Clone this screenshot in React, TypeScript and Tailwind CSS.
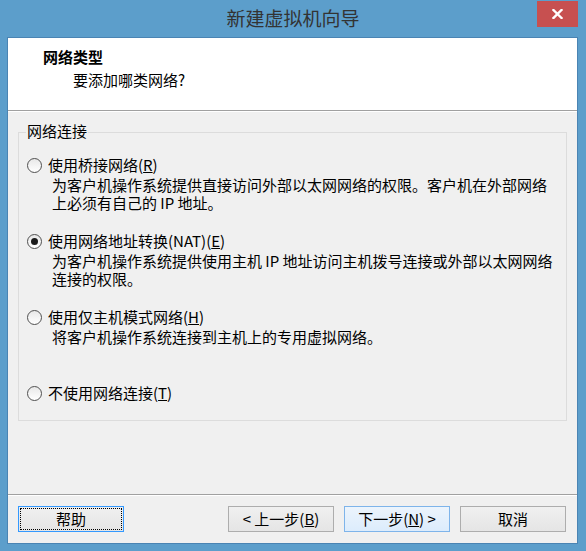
import React from 'react'

const Radio: React.FC<{ checked?: boolean }> = ({ checked }) => (
  <span className="w-[15px] h-[15px] shrink-0 rounded-full border border-[#505050] bg-gradient-to-b from-[#e8e8e8] to-white flex items-center justify-center">
    {checked && <span className="w-[7px] h-[7px] rounded-full bg-[#1a1a1a]" />}
  </span>
)

type Option = {
  label: React.ReactNode
  lines: string[]
  checked?: boolean
}

const options: Option[] = [
  {
    label: (
      <>
        使用桥接网络(<u>R</u>)
      </>
    ),
    lines: ['为客户机操作系统提供直接访问外部以太网网络的权限。客户机在外部网络', '上必须有自己的 IP 地址。'],
  },
  {
    label: (
      <>
        使用网络地址转换(NAT)(<u>E</u>)
      </>
    ),
    lines: ['为客户机操作系统提供使用主机 IP 地址访问主机拨号连接或外部以太网网络', '连接的权限。'],
    checked: true,
  },
  {
    label: (
      <>
        使用仅主机模式网络(<u>H</u>)
      </>
    ),
    lines: ['将客户机操作系统连接到主机上的专用虚拟网络。'],
  },
  {
    label: (
      <>
        不使用网络连接(<u>T</u>)
      </>
    ),
    lines: [],
  },
]

const Button: React.FC<{ children: React.ReactNode; kind?: 'focus' | 'default' }> = ({ children, kind }) => {
  const look =
    kind === 'focus'
      ? 'border-[#3399ff] bg-gradient-to-b from-[#f0f0f0] to-[#e5e5e5] outline-1 outline-dotted outline-black outline-offset-[-3px]'
      : kind === 'default'
      ? 'border-[#7eb4ea] bg-gradient-to-b from-[#ecf4fc] to-[#dcecfc]'
      : 'border-[#adadad] bg-gradient-to-b from-[#f0f0f0] to-[#e5e5e5]'
  return (
    <div className={`w-[106px] h-[26px] border ${look} flex items-center justify-center text-[15px] leading-[20px] text-black`}>
      {children}
    </div>
  )
}

export default function App() {
  return (
    <div className="w-[586px] h-[551px] bg-[#5c9ecb] flex flex-col font-['Noto_Sans_CJK_SC',sans-serif] select-none">
      {/* title bar */}
      <div className="relative h-[38px] flex items-center justify-center">
        <span className="text-[19px] leading-[24px] text-[#333333] -mt-[2px]">新建虚拟机向导</span>
        <div className="absolute right-[8px] top-[1px] w-[41px] h-[26px] bg-[#c75050] flex items-center justify-center">
          <svg width="11" height="10" viewBox="0 0 11 10">
            <path d="M1.5 1 L9.5 9 M9.5 1 L1.5 9" stroke="#ffffff" strokeWidth="2.4" strokeLinecap="square" />
          </svg>
        </div>
      </div>

      {/* client */}
      <div className="ml-[8px] mr-[9px] h-[505px] bg-[#f0f0f0] flex flex-col shadow-[0_0_0_1px_#4a84b3]">
        <div className="h-[72px] bg-white pl-[35px] pt-[10px]">
          <div className="text-[15px] leading-[18px] font-bold text-black">网络类型</div>
          <div className="mt-[5px] ml-[30px] text-[15px] leading-[18px] text-black">要添加哪类网络?</div>
        </div>
        <div className="h-[1px] bg-[#a0a0a0]" />
        <div className="h-[1px] bg-white" />

        {/* group box */}
        <div className="mt-[20px] mx-[10px] h-[289px] border border-[#dcdcdc] flex flex-col">
          <div className="-mt-[11px] ml-[7px] self-start px-[1px] bg-[#f0f0f0] text-[15px] leading-[18px] text-black">
            网络连接
          </div>
          <div className="mt-[15px] flex flex-col">
            {options.map((o, i) => (
              <div key={i} className="h-[76px] flex flex-col shrink-0">
                <div className="h-[20px] flex items-center pl-[8px]">
                  <Radio checked={o.checked} />
                  <span className="ml-[6px] text-[15px] leading-[20px] text-black whitespace-nowrap">{o.label}</span>
                </div>
                <div className="mt-[1px] pl-[33px]">
                  {o.lines.map((l, j) => (
                    <div key={j} className="text-[15px] leading-[18px] text-black whitespace-nowrap">
                      {l}
                    </div>
                  ))}
                </div>
              </div>
            ))}
          </div>
        </div>

        <div className="mt-[73px] h-[1px] bg-[#a0a0a0]" />
        <div className="h-[1px] bg-white" />

        {/* buttons */}
        <div className="mt-[10px] pl-[10px] pr-[11px] flex items-center">
          <Button kind="focus">帮助</Button>
          <div className="flex-1" />
          <div className="flex gap-[10px]">
            <Button>
              &lt; 上一步(<u>B</u>)
            </Button>
            <Button kind="default">
              下一步(<u>N</u>) &gt;
            </Button>
            <Button>取消</Button>
          </div>
        </div>
      </div>
    </div>
  )
}
